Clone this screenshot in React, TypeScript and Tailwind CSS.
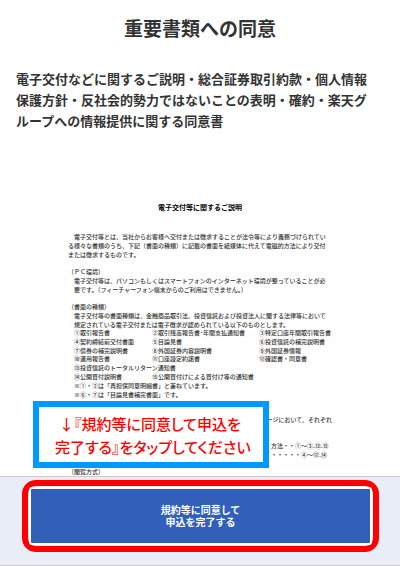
import React from 'react';

const documentRows = [
  ['①取引報告書', '②取引残高報告書･年間支払通知書', '③特定口座年間取引報告書'],
  ['④契約締結前交付書面', '⑤目論見書', '⑥投資信託の補完説明書'],
  ['⑦債券の補完説明書', '⑧外国証券内容説明書', '⑨外国証券情報'],
  ['⑩運用報告書', '⑪口座設定約諾書', '⑫確認書・同意書'],
  ['⑬投資信託のトータルリターン通知書'],
  ['⑭公開買付説明書', '⑮公開買付けによる買付け等の通知書'],
];

const DocumentTypes: React.FC = () => (
  <table className="ml-[6px] h-[52px] w-full table-fixed border-collapse leading-[8px]">
    <colgroup>
      <col className="w-[78px]" />
      <col className="w-[107px]" />
      <col />
    </colgroup>
    <tbody>
      {documentRows.map((row) => (
        <tr key={row[0]}>
          {row.map((cell, i) => (
            <td key={cell} colSpan={i === row.length - 1 ? 4 - row.length : 1} className="p-0">
              {cell}
            </td>
          ))}
        </tr>
      ))}
    </tbody>
  </table>
);

const Hint: React.FC = () => (
  <div className="absolute top-[211px] left-[33px] flex h-[67px] w-[236px] flex-col justify-center border-6 border-[#0099ff] bg-white pl-4 text-[15px] leading-[23px] font-medium whitespace-nowrap text-[#ff0000] [font-feature-settings:'palt']">
    <p className="pl-1">↓『規約等に同意して申込を</p>
    <p>完了する』をタップしてください</p>
  </div>
);

const Agreement: React.FC = () => (
  <section className="relative mt-[59px] h-[286px] overflow-hidden">
    <article className="mx-auto w-[264px] pt-[13px] text-[6px] leading-[9px] font-medium whitespace-nowrap text-[#333333]">
      <h3 className="text-center text-[7px] font-bold text-black">電子交付等に関するご説明</h3>

      <div className="mt-[20px]">
        <p className="pl-[6px]">電子交付等とは、当社からお客様へ交付または徴求することが法令等により義務づけられてい</p>
        <p>る様々な書類のうち、下記（書面の種類）に記載の書面を紙媒体に代えて電磁的方法により交付</p>
        <p>または徴求するものです。</p>
      </div>

      <div className="mt-[8px]">
        <h4>（ＰＣ環境）</h4>
        <p className="pl-[6px]">電子交付等は、パソコンもしくはスマートフォンのインターネット環境が整っていることが必</p>
        <p className="pl-[6px]">要です。（フィーチャーフォン端末からのご利用はできません｡）</p>
      </div>

      <div className="mt-[8px]">
        <h4>（書面の種類）</h4>
        <p className="pl-[6px]">電子交付等の書面種類は、金融商品取引法、投資信託および投資法人に関する法律等において</p>
        <p className="pl-[6px]">規定されている電子交付または電子徴求が認められている以下のものとします。</p>
        <DocumentTypes />
        <p className="pl-[6px]">※①・②は「再担保同意明細書」と兼ねています。</p>
        <p className="pl-[6px]">※⑥・⑦は「目論見書補完書面」です。</p>
      </div>

      <p className="mt-[16px] text-right">ージにおいて、それぞれ</p>
      <div className="mt-[17px] pl-[203px]">
        <p>方法・・①～③.⑬.⑮</p>
        <p>・・・・・④～⑫.⑭</p>
      </div>

      <h4 className="mt-[8px]">（閲覧方式）</h4>
    </article>
    <Hint />
  </section>
);

export default function App() {
  return (
    <div className="bg-white font-['Noto_Sans_CJK_JP','Liberation_Sans',sans-serif] text-[#333333]">
      <main>
        <h1 className="pt-[14px] text-center text-[19px] leading-[28px] font-bold">重要書類への同意</h1>
        <h2 className="mt-[26px] px-4 text-[13px] leading-[21px] font-bold whitespace-nowrap">
          電子交付などに関するご説明・総合証券取引約款・個人情報
          <br />
          保護方針・反社会的勢力ではないことの表明・確約・楽天グ
          <br />
          ループへの情報提供に関する同意書
        </h2>
        <Agreement />
      </main>

      <footer className="border-y border-[#cccccc] bg-[#e9edf7] pt-[3px] pr-[21px] pb-[13px] pl-[22px]">
        <div className="rounded-[14px] border-6 border-[#ff0000] px-px py-px">
          <button
            type="button"
            className="block h-[58px] w-full rounded-[3px] border-2 border-white bg-[#325fb8] text-[10px] leading-[12px] font-bold text-white"
          >
            規約等に同意して
            <br />
            申込を完了する
          </button>
        </div>
      </footer>
    </div>
  );
}
